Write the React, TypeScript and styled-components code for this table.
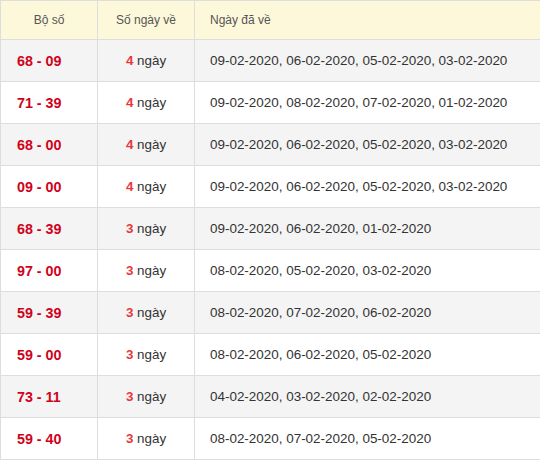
import React from "react";
import styled, { createGlobalStyle } from "styled-components";

const GlobalStyle = createGlobalStyle`
  html, body {
    margin: 0;
    padding: 0;
    background: #fff;
    overflow: hidden;
  }
  body {
    font-family: "Liberation Sans", Arial, sans-serif;
    color: #333;
  }
`;

const Table = styled.div`
  width: 100%;
  border-top: 1px solid #ddd;
  border-left: 1px solid #ddd;
  box-sizing: border-box;
`;

const Row = styled.div<{ $head?: boolean; $odd?: boolean }>`
  display: grid;
  grid-template-columns: 97px 97px 1fr;
  height: ${({ $head }) => ($head ? "39px" : "42px")};
  border-bottom: 1px solid #ddd;
  box-sizing: border-box;
  background: ${({ $head, $odd }) =>
    $head ? "#fef8db" : $odd ? "#f4f4f4" : "#fff"};
`;

const Cell = styled.div<{ $align?: "left" | "center"; $pad?: number; $last?: boolean }>`
  display: flex;
  align-items: center;
  justify-content: ${({ $align }) => ($align === "center" ? "center" : "flex-start")};
  padding-left: ${({ $pad }) => $pad ?? 0}px;
  border-right: ${({ $last }) => ($last ? "none" : "1px solid #ddd")};
  box-sizing: border-box;
  white-space: nowrap;
  overflow: hidden;
`;

const HeadText = styled.span`
  font-size: 12px;
  color: #555;
`;

const Pair = styled.span`
  font-size: 14.3px;
  font-weight: bold;
  color: #d0021b;
`;

const Count = styled.span`
  font-size: 13.4px;
  color: #333;
`;

const CountNum = styled.b`
  color: #e8383d;
`;

const Dates = styled.span`
  font-size: 13.45px;
  color: #333;
`;

const rows = [
  { pair: "68 - 09", n: 4, dates: "09-02-2020, 06-02-2020, 05-02-2020, 03-02-2020" },
  { pair: "71 - 39", n: 4, dates: "09-02-2020, 08-02-2020, 07-02-2020, 01-02-2020" },
  { pair: "68 - 00", n: 4, dates: "09-02-2020, 06-02-2020, 05-02-2020, 03-02-2020" },
  { pair: "09 - 00", n: 4, dates: "09-02-2020, 06-02-2020, 05-02-2020, 03-02-2020" },
  { pair: "68 - 39", n: 3, dates: "09-02-2020, 06-02-2020, 01-02-2020" },
  { pair: "97 - 00", n: 3, dates: "08-02-2020, 05-02-2020, 03-02-2020" },
  { pair: "59 - 39", n: 3, dates: "08-02-2020, 07-02-2020, 06-02-2020" },
  { pair: "59 - 00", n: 3, dates: "08-02-2020, 06-02-2020, 05-02-2020" },
  { pair: "73 - 11", n: 3, dates: "04-02-2020, 03-02-2020, 02-02-2020" },
  { pair: "59 - 40", n: 3, dates: "08-02-2020, 07-02-2020, 05-02-2020" },
];

export default function App() {
  return (
    <>
      <GlobalStyle />
      <Table>
        <Row $head>
          <Cell $align="center">
            <HeadText>Bộ số</HeadText>
          </Cell>
          <Cell $align="center">
            <HeadText>Số ngày về</HeadText>
          </Cell>
          <Cell $pad={15} $last>
            <HeadText>Ngày đã về</HeadText>
          </Cell>
        </Row>
        {rows.map((r, i) => (
          <Row key={r.pair} $odd={i % 2 === 0}>
            <Cell $pad={16}>
              <Pair>{r.pair}</Pair>
            </Cell>
            <Cell $align="center">
              <Count>
                <CountNum>{r.n}</CountNum> ngày
              </Count>
            </Cell>
            <Cell $pad={15} $last>
              <Dates>{r.dates}</Dates>
            </Cell>
          </Row>
        ))}
      </Table>
    </>
  );
}
